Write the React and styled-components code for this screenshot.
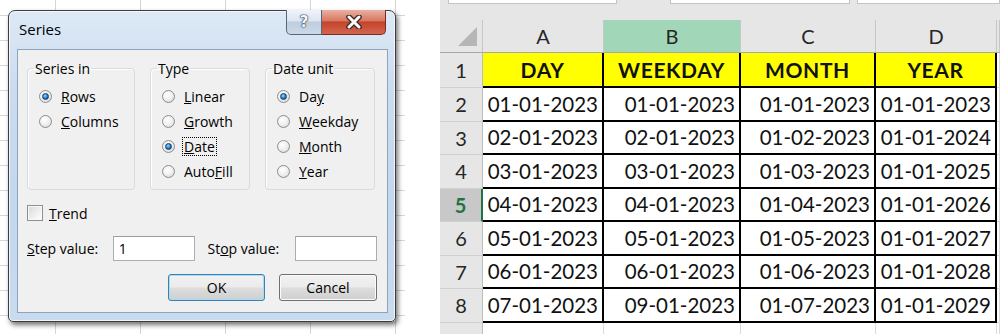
import { Fragment } from "react"
import styled, { createGlobalStyle } from "styled-components"

const Global = createGlobalStyle`
    html, body { margin: 0; padding: 0; background: #fff; }
    body { width: 1000px; height: 334px; overflow: hidden; }
`

const Page = styled.div`
    display: flex;
    width: 1000px;
    height: 334px;
    overflow: hidden;
    background: #fff;
`

/* ---------- left: Excel behind the Series dialog ---------- */

const Backdrop = styled.div`
    width: 405px;
    height: 334px;
    box-sizing: border-box;
    padding: 10px 0 0 8px;
    background-color: #fff;
    background-image:
        linear-gradient(to right, #d6d6d6 1px, transparent 1px),
        linear-gradient(to bottom, #d6d6d6 1px, transparent 1px);
    background-size: 85px 25px;
    background-position: 55px 15px;
`

const Dialog = styled.div`
    width: 388px;
    height: 312px;
    box-sizing: border-box;
    display: flex;
    flex-direction: column;
    padding: 0 7px 8px 8px;
    border: 1px solid #3d3d3d;
    border-radius: 7px 7px 5px 5px;
    background: linear-gradient(180deg, #dde9f6 0%, #cbdcef 25%, #c3d7ed 60%, #c8dbef 100%);
    box-shadow: 2px 3px 5px rgba(0, 0, 0, 0.55), inset 0 0 0 1px rgba(255, 255, 255, 0.7);
    font-family: "Open Sans", "Noto Sans", sans-serif;
    font-size: 14px;
    color: #000;
`

const TitleBar = styled.div`
    height: 38px;
    display: flex;
    justify-content: space-between;
    align-items: flex-start;
    margin-right: 2px;
`

const Title = styled.div`
    padding: 8px 0 0 2px;
    font-size: 15px;
`

const CaptionButtons = styled.div`
    display: flex;
    margin-top: -1px;
`

const HelpButton = styled.div`
    width: 36px;
    height: 25px;
    box-sizing: border-box;
    border: 1px solid #56667c;
    border-top: none;
    border-radius: 0 0 0 5px;
    background: linear-gradient(180deg, #f0f4fa 0%, #dce5f0 45%, #bfcddf 50%, #cbd8e7 100%);
    display: flex;
    align-items: center;
    justify-content: center;
    font-family: "DejaVu Sans", sans-serif;
    font-weight: 700;
    font-size: 15px;
    color: #f4f7fb;
    text-shadow: 0 0 1px #2b3a4e, 0 0 1px #2b3a4e, 0 0 2px #2b3a4e;
`

const CloseButton = styled.div`
    width: 64px;
    height: 25px;
    box-sizing: border-box;
    border: 1px solid #7b2a20;
    border-top: none;
    border-left: none;
    border-radius: 0 0 5px 0;
    background: linear-gradient(180deg, #eab0a2 0%, #d97762 45%, #c5432b 50%, #d3654e 100%);
    display: flex;
    align-items: center;
    justify-content: center;
`

const Client = styled.div`
    flex: 1;
    border: 1px solid #8ea4bd;
    background: #f0f0f0;
    padding: 9px 10px 0 9px;
    display: flex;
    flex-direction: column;
`

const Groups = styled.div`
    display: flex;
    gap: 15px;
`

const Group = styled.fieldset`
    margin: 0;
    width: ${p => p.$w}px;
    height: 131px;
    box-sizing: border-box;
    padding: 6px 0 0 6px;
    border: 1px solid #d5dbe0;
    border-radius: 4px;
    box-shadow: inset 1px 1px 0 #fff;
    legend {
        padding: 0 1px;
        line-height: 19px;
    }
`

const Option = styled.div`
    height: 25px;
    display: flex;
    align-items: center;
    gap: 8px;
    padding-left: 5px;
`

const Radio = styled.span`
    width: 13px;
    height: 13px;
    flex: none;
    box-sizing: border-box;
    border-radius: 50%;
    border: 1px solid #8d8d8d;
    background: radial-gradient(circle at 40% 35%, #ffffff 0%, #f1f1f1 45%, #d2d2d2 100%);
    display: grid;
    place-items: center;
    &::after {
        content: "";
        width: 7px;
        height: 7px;
        box-sizing: border-box;
        border-radius: 50%;
        display: ${p => (p.$on ? "block" : "none")};
        border: 1px solid #123e6a;
        background: radial-gradient(circle at 40% 35%, #9ad8ff 0%, #2478c8 55%, #0c3f7a 100%);
    }
`

const Label = styled.span`
    line-height: 17px;
    padding: 0 1px;
    outline: ${p => (p.$focus ? "1px dotted #000" : "none")};
    outline-offset: 0;
`

const TrendRow = styled.div`
    margin-top: 13px;
    height: 20px;
    display: flex;
    align-items: center;
    gap: 6px;
`

const Check = styled.span`
    width: 16px;
    height: 16px;
    box-sizing: border-box;
    border: 1px solid #8f8f8f;
    background: linear-gradient(135deg, #d9d9d9 0%, #f4f4f4 70%, #fdfdfd 100%);
    box-shadow: inset 0 0 0 1px #f8f8f8;
`

const FieldRow = styled.div`
    margin-top: 13px;
    display: flex;
    align-items: center;
`

const FieldLabel = styled.span`
    width: ${p => p.$w}px;
    margin-left: ${p => p.$ml || 0}px;
`

const Input = styled.div`
    width: 82px;
    height: 25px;
    box-sizing: border-box;
    border: 1px solid #abadb3;
    border-top-color: #9a9ca3;
    background: #fff;
    padding: 2px 0 0 5px;
`

const Buttons = styled.div`
    margin-top: 13px;
    display: flex;
    justify-content: flex-end;
    gap: 14px;
`

const Button = styled.div`
    width: ${p => p.$w}px;
    height: 27px;
    box-sizing: border-box;
    border-radius: 3px;
    border: 1px solid ${p => (p.$default ? "#3c7fb1" : "#707070")};
    box-shadow: inset 0 0 0 1px ${p => (p.$default ? "#a6dcf5" : "#fbfbfb")};
    background: linear-gradient(180deg, #f2f2f2 0%, #ebebeb 48%, #dddddd 52%, #cfcfcf 100%);
    display: flex;
    align-items: center;
    justify-content: center;
`

/* ---------- right: spreadsheet ---------- */

const Sheet = styled.div`
    margin-left: 35px;
    flex: 1;
    height: 334px;
    overflow: hidden;
    background: #fff;
    font-family: Lato, "Open Sans", sans-serif;
    color: #1a1a1a;
`

const Strip = styled.div`
    height: 20px;
    box-sizing: border-box;
    background: #e6e6e6;
    display: flex;
    align-items: flex-start;
`

const FormulaBox = styled.div`
    height: 4px;
    width: ${p => p.$w}px;
    margin-left: ${p => p.$ml}px;
    box-sizing: border-box;
    background: #fff;
    border: 1px solid #c4c4c4;
    border-top: none;
`

const Grid = styled.div`
    display: grid;
    grid-template-columns: 43px 121px 137px 135px 121px 1fr;
    grid-template-rows: 33px 35px repeat(7, 33.5px) 20px;
`

const Corner = styled.div`
    background: #e6e6e6;
    border-right: 1px solid #c6c6c6;
    border-bottom: 1px solid #a8a8a8;
    display: flex;
    align-items: flex-end;
    justify-content: flex-end;
    padding: 0 5px 6px 0;
    &::after {
        content: "";
        width: 0;
        height: 0;
        border-left: 19px solid transparent;
        border-bottom: 19px solid #b6b6b6;
    }
`

const ColHead = styled.div`
    background: ${p => (p.$active ? "#a2d6b8" : "#e6e6e6")};
    border-right: 1px solid #c6c6c6;
    border-bottom: 1px solid #a8a8a8;
    display: flex;
    align-items: center;
    justify-content: center;
    font-size: 20px;
    color: #262626;
`

const RowHead = styled.div`
    background: ${p => (p.$active ? "#c8c8c8" : "#e6e6e6")};
    border-right: ${p => (p.$active ? "2px solid #217346" : "1px solid #bdbdbd")};
    border-bottom: 1px solid #d0d0d0;
    display: flex;
    align-items: center;
    justify-content: center;
    font-size: 20px;
    font-weight: ${p => (p.$active ? 700 : 400)};
    color: ${p => (p.$active ? "#217346" : "#262626")};
`

const Cell = styled.div`
    border-right: 2px solid #000;
    border-bottom: 2px solid #000;
    background: ${p => (p.$head ? "#ffff00" : "#fff")};
    display: flex;
    align-items: center;
    justify-content: ${p => (p.$head ? "center" : "flex-end")};
    padding-right: ${p => (p.$head ? 0 : 4)}px;
    font-size: ${p => (p.$head ? 21 : 20.5)}px;
    font-weight: ${p => (p.$head ? 700 : 400)};
    letter-spacing: ${p => (p.$head ? 0.6 : 0)}px;
    color: #111;
`

const Blank = styled.div`
    background: ${p => (p.$gray ? "#e6e6e6" : "#fff")};
    border-right: 1px solid ${p => (p.$gray ? "#c6c6c6" : "#dadada")};
    border-bottom: 1px solid ${p => (p.$gray ? "#a8a8a8" : "#dadada")};
`

const headers = ["DAY", "WEEKDAY", "MONTH", "YEAR"]
const rows = [
    ["01-01-2023", "01-01-2023", "01-01-2023", "01-01-2023"],
    ["02-01-2023", "02-01-2023", "01-02-2023", "01-01-2024"],
    ["03-01-2023", "03-01-2023", "01-03-2023", "01-01-2025"],
    ["04-01-2023", "04-01-2023", "01-04-2023", "01-01-2026"],
    ["05-01-2023", "05-01-2023", "01-05-2023", "01-01-2027"],
    ["06-01-2023", "06-01-2023", "01-06-2023", "01-01-2028"],
    ["07-01-2023", "09-01-2023", "01-07-2023", "01-01-2029"],
]

function CloseGlyph() {
    return (
        <svg width="20" height="14" viewBox="0 0 20 14">
            <path d="M5 2 L15 12 M15 2 L5 12" stroke="#3a2a28" strokeWidth="5.5" strokeLinecap="round" />
            <path d="M5 2 L15 12 M15 2 L5 12" stroke="#fafafa" strokeWidth="3" strokeLinecap="round" />
        </svg>
    )
}

function SeriesDialog() {
    return (
        <Dialog>
            <TitleBar>
                <Title>Series</Title>
                <CaptionButtons>
                    <HelpButton>?</HelpButton>
                    <CloseButton><CloseGlyph /></CloseButton>
                </CaptionButtons>
            </TitleBar>
            <Client>
                <Groups>
                    <Group $w={108}>
                        <legend>Series in</legend>
                        <Option><Radio $on /><Label><u>R</u>ows</Label></Option>
                        <Option><Radio /><Label><u>C</u>olumns</Label></Option>
                    </Group>
                    <Group $w={100}>
                        <legend>Type</legend>
                        <Option><Radio /><Label><u>L</u>inear</Label></Option>
                        <Option><Radio /><Label><u>G</u>rowth</Label></Option>
                        <Option><Radio $on /><Label $focus><u>D</u>ate</Label></Option>
                        <Option><Radio /><Label>Auto<u>F</u>ill</Label></Option>
                    </Group>
                    <Group $w={110}>
                        <legend>Date unit</legend>
                        <Option><Radio $on /><Label>Da<u>y</u></Label></Option>
                        <Option><Radio /><Label><u>W</u>eekday</Label></Option>
                        <Option><Radio /><Label><u>M</u>onth</Label></Option>
                        <Option><Radio /><Label><u>Y</u>ear</Label></Option>
                    </Group>
                </Groups>
                <TrendRow><Check /><span><u>T</u>rend</span></TrendRow>
                <FieldRow>
                    <FieldLabel $w={86}><u>S</u>tep value:</FieldLabel>
                    <Input>1</Input>
                    <FieldLabel $w={88} $ml={13}>St<u>o</u>p value:</FieldLabel>
                    <Input />
                </FieldRow>
                <Buttons>
                    <Button $w={97} $default>OK</Button>
                    <Button $w={98}>Cancel</Button>
                </Buttons>
            </Client>
        </Dialog>
    )
}

function Spreadsheet() {
    return (
        <Sheet>
            <Strip>
                <FormulaBox $ml={8} $w={169} />
                <FormulaBox $ml={53} $w={180} />
                <FormulaBox $ml={7} $w={143} />
            </Strip>
            <Grid>
                <Corner />
                {["A", "B", "C", "D"].map(l => (
                    <ColHead key={l} $active={l === "B"}>{l}</ColHead>
                ))}
                <Blank $gray />

                <RowHead>1</RowHead>
                {headers.map(h => <Cell key={h} $head>{h}</Cell>)}
                <Blank />

                {rows.map((r, i) => (
                    <Fragment key={i}>
                        <RowHead $active={i + 2 === 5}>{i + 2}</RowHead>
                        {r.map((v, j) => <Cell key={j}>{v}</Cell>)}
                        <Blank />
                    </Fragment>
                ))}

                {/* row 9 is cut off by the screenshot edge */}
                <RowHead />
                <Blank /><Blank /><Blank /><Blank /><Blank />
            </Grid>
        </Sheet>
    )
}

export default function App() {
    return (
        <Page>
            <Global />
            <Backdrop>
                <SeriesDialog />
            </Backdrop>
            <Spreadsheet />
        </Page>
    )
}
